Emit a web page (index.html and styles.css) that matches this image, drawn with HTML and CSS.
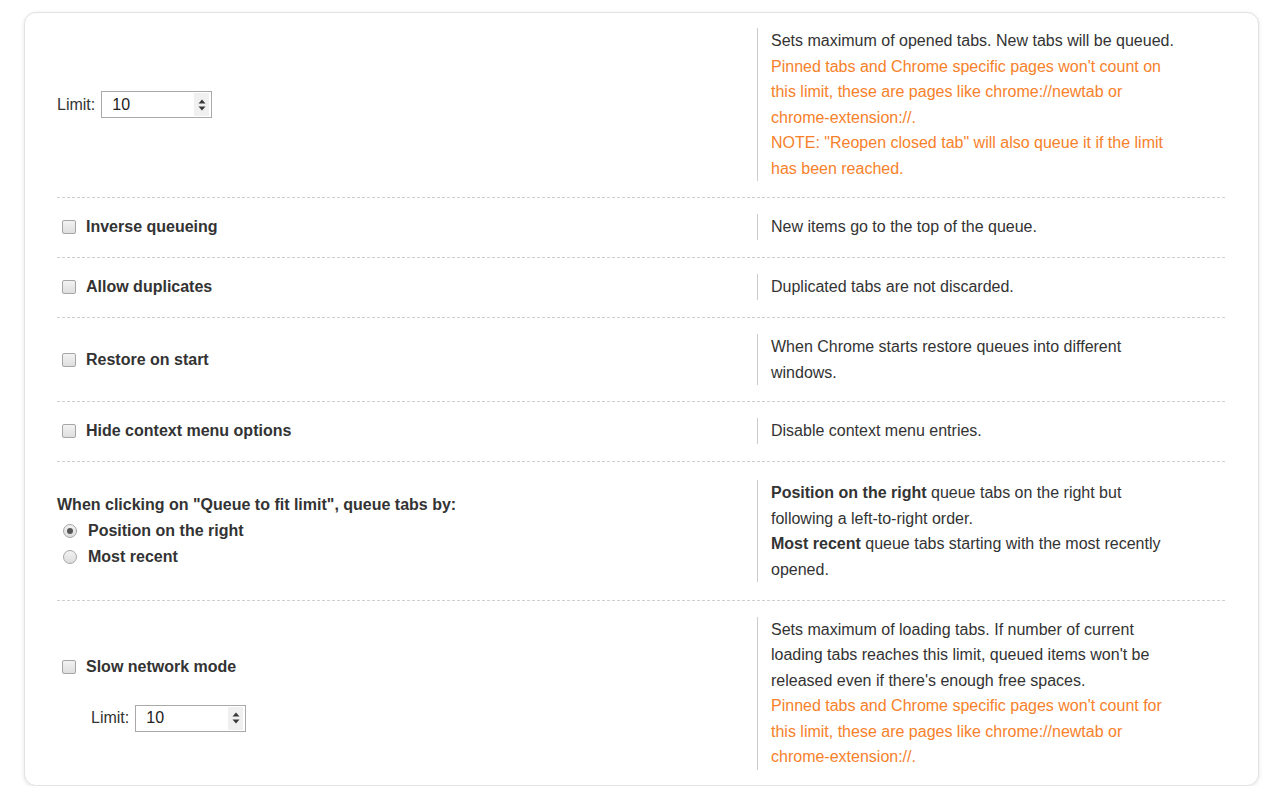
FILE: index.html
```html
<!DOCTYPE html>
<html>
<head>
<meta charset="utf-8">
<link rel="stylesheet" href="styles.css">
</head>
<body>
<div class="card">
  <div class="row first">
    <div class="left">
      <div class="limit">
        <span class="lbl">Limit:</span>
        <span class="numbox"><span class="val">10</span><span class="spin"><svg width="8" height="14" viewBox="0 0 8 14"><path d="M0.5 5.5 L4 1.5 L7.5 5.5 Z M0.5 8.5 L4 12.5 L7.5 8.5 Z" fill="#3a3a3a"/></svg></span></span>
      </div>
    </div>
    <div class="right">
      Sets maximum of opened tabs. New tabs will be queued.<br>
      <span class="warn">Pinned tabs and Chrome specific pages won't count on this limit, these are pages like chrome://newtab or <span class="nw">chrome-extension://.</span><br>NOTE: "Reopen closed tab" will also queue it if the limit has been reached.</span>
    </div>
  </div>

  <div class="row">
    <div class="left"><label class="opt"><span class="cb"></span><b>Inverse queueing</b></label></div>
    <div class="right">New items go to the top of the queue.</div>
  </div>

  <div class="row">
    <div class="left"><label class="opt"><span class="cb"></span><b>Allow duplicates</b></label></div>
    <div class="right">Duplicated tabs are not discarded.</div>
  </div>

  <div class="row two">
    <div class="left"><label class="opt"><span class="cb"></span><b>Restore on start</b></label></div>
    <div class="right">When Chrome starts restore queues into different windows.</div>
  </div>

  <div class="row">
    <div class="left"><label class="opt"><span class="cb"></span><b>Hide context menu options</b></label></div>
    <div class="right">Disable context menu entries.</div>
  </div>

  <div class="row tall">
    <div class="left">
      <div class="heading">When clicking on "Queue to fit limit", queue tabs by:</div>
      <label class="opt"><span class="rb on"></span><b>Position on the right</b></label>
      <label class="opt"><span class="rb"></span><b>Most recent</b></label>
    </div>
    <div class="right">
      <b>Position on the right</b> queue tabs on the right but following a <span class="nw">left-to-right</span> order.<br>
      <b>Most recent</b> queue tabs starting with the most recently opened.
    </div>
  </div>

  <div class="row last">
    <div class="left">
      <label class="opt"><span class="cb"></span><b>Slow network mode</b></label>
      <div class="limit sub">
        <span class="lbl">Limit:</span>
        <span class="numbox"><span class="val">10</span><span class="spin"><svg width="8" height="14" viewBox="0 0 8 14"><path d="M0.5 5.5 L4 1.5 L7.5 5.5 Z M0.5 8.5 L4 12.5 L7.5 8.5 Z" fill="#3a3a3a"/></svg></span></span>
      </div>
    </div>
    <div class="right">
      Sets maximum of loading tabs. If number of current loading tabs reaches this limit, queued items won't be released even if there's enough free spaces.<br>
      <span class="warn">Pinned tabs and Chrome specific pages won't count for this limit, these are pages like chrome://newtab or <span class="nw">chrome-extension://.</span></span>
    </div>
  </div>
</div>
</body>
</html>
```

FILE: styles.css
```css
html, body {
  margin: 0;
  padding: 0;
  background: #ffffff;
}
body {
  font-family: "Liberation Sans", Arial, sans-serif;
  font-size: 16px;
  line-height: 25.5px;
  color: #333333;
}
.card {
  box-sizing: border-box;
  width: 1235px;
  height: 774px;
  margin: 12px 0 0 24px;
  padding: 0 33px 0 32px;
  background: #ffffff;
  border: 1px solid #e2e2e2;
  border-radius: 12px;
  box-shadow: 0 1px 4px rgba(0, 0, 0, 0.10);
  overflow: hidden;
}
.row {
  display: grid;
  grid-template-columns: 1fr 468px;
  align-items: center;
  padding: 16px 0 17px;
  border-bottom: 1px dashed #cfcfcf;
}
.row.first {
  padding: 15px 0 16px;
}
.row.two {
  padding: 16px 0 16px;
}
.row.tall {
  padding: 18px 0 17.5px;
}
.row.last {
  border-bottom: none;
  padding: 16px 0 14px;
}
.right {
  border-left: 1px solid #cccccc;
  padding: 0 42px 0 13px;
}
.nw {
  white-space: nowrap;
}
.warn {
  color: #f7812a;
}
.left b, .right b {
  font-weight: bold;
}
.limit {
  display: flex;
  align-items: center;
  height: 28px;
}
.limit .lbl {
  margin-right: 6px;
}
.limit.sub {
  margin-top: 24px;
  padding-left: 34px;
}
.numbox {
  box-sizing: border-box;
  display: flex;
  align-items: center;
  width: 111px;
  height: 27px;
  border: 1px solid #a9a9a9;
  padding-left: 10px;
  background: #ffffff;
}
.numbox .val {
  flex: 1;
  color: #222222;
}
.spin {
  display: flex;
  align-items: center;
  justify-content: center;
  width: 15px;
  height: 23px;
  margin-right: 2px;
  background: #f0f0f0;
}
.opt {
  display: flex;
  align-items: center;
  height: 26px;
}
.cb {
  box-sizing: border-box;
  width: 14px;
  height: 14px;
  margin: 0 10px 0 5px;
  border: 1px solid #a6a6a6;
  border-radius: 2px;
  background: linear-gradient(#f2f2f2, #dedede);
}
.rb {
  box-sizing: border-box;
  width: 14px;
  height: 14px;
  margin: 0 11px 0 6px;
  border: 1px solid #a6a6a6;
  border-radius: 50%;
  background: linear-gradient(#f2f2f2, #dcdcdc);
  position: relative;
}
.rb.on::after {
  content: "";
  position: absolute;
  left: 3px;
  top: 3px;
  width: 6px;
  height: 6px;
  border-radius: 50%;
  background: #555555;
}
.heading {
  font-weight: bold;
  line-height: 26px;
}
```
